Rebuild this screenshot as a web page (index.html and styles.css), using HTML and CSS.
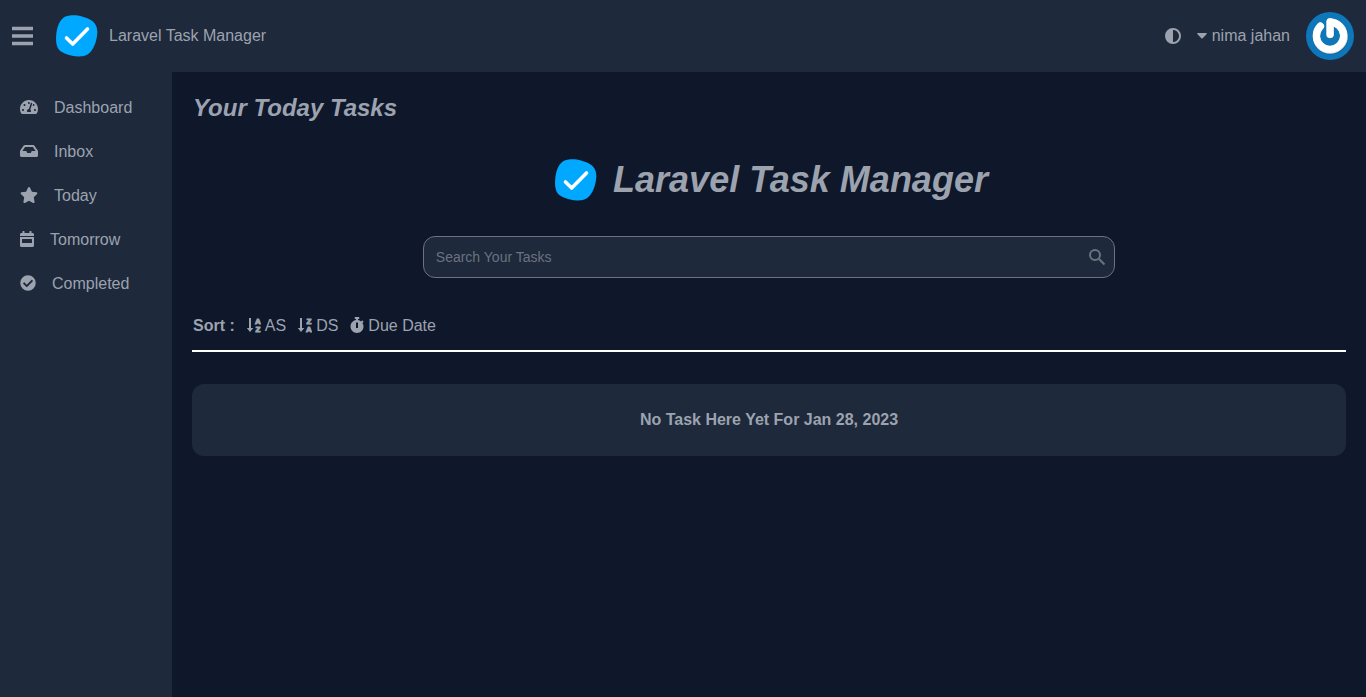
FILE: index.html
```html
<!DOCTYPE html>
<html lang="en">
<head>
<meta charset="utf-8">
<meta name="viewport" content="width=device-width, initial-scale=1">
<title>Laravel Task Manager</title>
<link rel="stylesheet" href="styles.css">
</head>
<body>
<svg class="sprite" aria-hidden="true">
  <symbol id="logo" viewBox="0 0 42 42">
    <path fill="#00a9ff" d="M15.500.3C22-.1 30 2 35.500 5.500c4.500 3 6.200 7.500 5.800 13-.5 6.500-2.500 12.700-6 17.500-3.200 4.300-8 5.700-13.300 5.400-6-.4-12.500-1.900-17-4.900C1 33.700-.2 28.500.1 22.500.4 16 1.500 9.800 5 5.200 7.500 1.900 11 .6 15.500.3Z"/>
    <path fill="none" stroke="#fff" stroke-width="3.600" stroke-linecap="round" stroke-linejoin="round" d="m10.500 23 6.200 6L31.500 14"/>
  </symbol>
</svg>
<header class="topbar">
  <button class="icon-button" type="button" aria-label="Toggle menu">
    <svg class="menu-icon" viewBox="0 0 22 20" fill="currentColor"><path d="M0 .8h21v3.500H0zM0 8.300h21v3.500H0zM0 15.800h21v3.500H0z"/></svg>
  </button>
  <a class="brand" href="#">
    <svg class="logo" aria-hidden="true"><use href="#logo"/></svg>
    <span>Laravel Task Manager</span>
  </a>
  <div class="account">
    <button class="icon-button" type="button" aria-label="Toggle theme">
      <svg class="theme-icon" viewBox="0 0 512 512" fill="currentColor"><path d="M448 256c0-106-86-192-192-192v384c106 0 192-86 192-192zM0 256a256 256 0 1 1 512 0 256 256 0 1 1-512 0z"/></svg>
    </button>
    <button class="user-button" type="button">
      <svg class="caret" viewBox="0 0 10 6" fill="currentColor" aria-hidden="true"><path d="M.8 0h8.400q1 .2.500 1L5.700 5.200q-.7.600-1.400 0L.3 1Q-.2.200.8 0z"/></svg>
      <span>nima jahan</span>
    </button>
    <svg class="avatar" viewBox="0 0 48 48" role="img" aria-label="nima jahan">
      <circle cx="24" cy="24" r="24" fill="#0d77b9"/>
      <g fill="none" stroke-linecap="round" stroke-linejoin="round" stroke-width="7.500">
        <path stroke="#075f98" d="M14.800 14.500a14 14 0 1 0 18.700-.5q-3.500-3-9-3.600V23"/>
        <path stroke="#dedede" d="M14.500 14.400a13.800 13.800 0 1 0 18.600-.8q-3.500-3-9-3.600v12.500"/>
        <path stroke="#fff" stroke-width="7" d="M14.300 14a13.600 13.600 0 1 0 18.800-.4q-3.500-3-9-3.800v12.400"/>
      </g>
    </svg>
  </div>
</header>
<div class="shell">
  <nav class="sidebar" aria-label="Main">
    <a class="nav-link" href="#">
      <svg class="icon icon-18" viewBox="0 0 576 512" fill="currentColor" aria-hidden="true"><path d="M288 32C128.900 32 0 160.900 0 320c0 52.800 14.300 102.300 39.100 144.800 5.600 9.600 16.300 15.200 27.400 15.200h443c11.100 0 21.800-5.600 27.400-15.200C561.800 422.300 576 372.800 576 320c0-159.100-128.900-288-288-288zm0 64c14.700 0 26.600 10.100 30.300 23.700-1.100 2.300-2.600 4.200-3.500 6.700l-9.200 27.700c-5.100 3.500-11 6-17.600 6-17.700 0-32-14.300-32-32s14.300-32 32-32zM96 384c-17.700 0-32-14.300-32-32s14.300-32 32-32 32 14.300 32 32-14.300 32-32 32zm48-160c-17.700 0-32-14.300-32-32s14.300-32 32-32 32 14.300 32 32-14.300 32-32 32zm246.800-72.400-61.300 184C343.100 347.300 352 364.500 352 384c0 11.700-3.400 22.600-8.900 32H232.900c-5.500-9.500-8.900-20.300-8.900-32 0-34 26.500-61.500 59.900-63.600l61.300-184c4.200-12.600 17.700-19.500 30.400-15.200 12.600 4.200 19.400 17.900 15.200 30.400zm14.700 57.200 15.500-46.600c3.500-1.300 7.100-2.200 11.100-2.200 17.700 0 32 14.300 32 32s-14.300 32-32 32c-11.400 0-20.900-6.300-26.600-15.200zM480 384c-17.700 0-32-14.300-32-32s14.300-32 32-32 32 14.300 32 32-14.300 32-32 32z"/></svg>
      Dashboard
    </a>
    <a class="nav-link" href="#">
      <svg class="icon icon-18" viewBox="0 0 576 512" fill="currentColor" aria-hidden="true"><path d="M567.900 243.900 462.200 85.400A48 48 0 0 0 422.200 64H153.800a48 48 0 0 0-40 21.400L8.100 243.900A48 48 0 0 0 0 270.500V400c0 26.500 21.500 48 48 48h480c26.500 0 48-21.500 48-48V270.500a48 48 0 0 0-8.100-26.600zM162.300 128h251.400l85.300 128H376l-32 64H232l-32-64H77z"/></svg>
      Inbox
    </a>
    <a class="nav-link" href="#">
      <svg class="icon icon-18" viewBox="0 0 576 512" fill="currentColor" aria-hidden="true"><path d="M259.300 17.800 194 150.200 47.900 171.500c-26.200 3.800-36.700 36.100-17.700 54.600l105.700 103-25 145.500c-4.500 26.300 23.200 46 46.400 33.700L288 439.600l130.700 68.700c23.200 12.200 50.900-7.400 46.400-33.700l-25-145.500 105.700-103c19-18.500 8.500-50.800-17.700-54.600L382 150.200 316.700 17.800c-11.700-23.600-45.600-23.900-57.400 0z"/></svg>
      Today
    </a>
    <a class="nav-link" href="#">
      <svg class="icon icon-14" viewBox="0 0 448 512" fill="currentColor" aria-hidden="true"><path d="M96 0h32q16 0 16 16v48h160V16q0-16 16-16h32q16 0 16 16v48h32c27 0 48 21 48 48v48H0v-48c0-27 21-48 48-48h32V16Q80 0 96 0zM0 192h448v272c0 27-21 48-48 48H48c-27 0-48-21-48-48zm80 64q-16 0-16 16v96q0 16 16 16h288q16 0 16-16v-96q0-16-16-16z"/></svg>
      Tomorrow
    </a>
    <a class="nav-link" href="#">
      <svg class="icon icon-16" viewBox="0 0 512 512" fill="currentColor" aria-hidden="true"><path d="M504 256a248 248 0 1 1-496 0 248 248 0 1 1 496 0zM227.300 387.300l184-184c6.200-6.200 6.200-16.400 0-22.600l-22.600-22.600c-6.200-6.200-16.400-6.200-22.600 0L216 308.100l-70.100-70.100c-6.200-6.200-16.400-6.200-22.600 0l-22.600 22.600c-6.200 6.200-6.200 16.400 0 22.600l104 104c6.200 6.300 16.400 6.300 22.600.1z"/></svg>
      Completed
    </a>
  </nav>
  <main class="content">
    <h2 class="page-title">Your Today Tasks</h2>
    <div class="hero">
      <svg class="logo" aria-hidden="true"><use href="#logo"/></svg>
      <h1 class="hero-title">Laravel Task Manager</h1>
    </div>
    <form class="search" role="search">
      <input class="search-input" type="search" aria-label="Search your tasks" placeholder="Search Your Tasks">
      <button class="icon-button search-button" type="button" aria-label="Search">
        <svg class="search-icon" viewBox="0 0 18 18" fill="none" stroke="currentColor" stroke-width="2" aria-hidden="true"><circle cx="7" cy="7" r="5"/><path d="m10.800 10.800 5.700 5.700"/></svg>
      </button>
    </form>
    <div class="sort">
      <strong class="sort-label">Sort :</strong>
      <a class="sort-link" href="#">
        <svg class="icon icon-14" viewBox="1 0 14 16" fill="currentColor" aria-hidden="true"><path d="M3 1h2v10h2.300L4 15 .9 11H3z"/><text class="sort-letter" x="12" y="7">A</text><text class="sort-letter" x="12" y="15">Z</text></svg>
        AS
      </a>
      <a class="sort-link" href="#">
        <svg class="icon icon-14" viewBox="1 0 14 16" fill="currentColor" aria-hidden="true"><path d="M3 1h2v10h2.300L4 15 .9 11H3z"/><text class="sort-letter" x="12" y="7">Z</text><text class="sort-letter" x="12" y="15">A</text></svg>
        DS
      </a>
      <a class="sort-link" href="#">
        <svg class="icon icon-14" viewBox="0 0 448 512" fill="currentColor" aria-hidden="true"><path d="M432 304c0 114.900-93.100 208-208 208S16 418.900 16 304c0-104 76.300-190.200 176-205.500V64h-28c-6.600 0-12-5.400-12-12V12c0-6.600 5.400-12 12-12h120c6.600 0 12 5.400 12 12v40c0 6.600-5.400 12-12 12h-28v34.500c37.500 5.800 71.700 21.600 99.700 44.600l27.500-27.500c4.700-4.700 12.300-4.700 17 0l28.300 28.300c4.700 4.700 4.700 12.300 0 17l-29.400 29.400C419.700 223.900 432 262.500 432 304zm-176 36V188c0-6.600-5.400-12-12-12h-40c-6.600 0-12 5.400-12 12v152c0 6.600 5.400 12 12 12h40c6.600 0 12-5.400 12-12z"/></svg>
        Due Date
      </a>
    </div>
    <p class="empty">No Task Here Yet For Jan 28, 2023</p>
  </main>
</div>
</body>
</html>
```
FILE: styles.css
```css
* {
  box-sizing: border-box;
}

body {
  margin: 0;
  min-height: 100vh;
  display: flex;
  flex-direction: column;
  background: #0f172a;
  color: #9ca3af;
  font: 16px/24px "Liberation Sans", Arial, sans-serif;
}

a {
  color: inherit;
  text-decoration: none;
}

button {
  font: inherit;
  color: inherit;
  background: none;
  border: 0;
  padding: 0;
  cursor: pointer;
}

svg {
  display: block;
  flex: none;
}

.sprite {
  position: absolute;
  width: 0;
  height: 0;
}

.topbar {
  display: flex;
  align-items: center;
  padding: 12px;
  background: #1e293b;
}

.icon-button {
  display: flex;
}

.menu-icon {
  width: 22px;
  height: 20px;
}

.brand {
  display: flex;
  align-items: center;
  gap: 11px;
  margin-left: 22px;
}

.logo {
  width: 42px;
  height: 42px;
}

.account {
  display: flex;
  align-items: center;
  gap: 16px;
  margin-left: auto;
}

.theme-icon {
  width: 16px;
  height: 16px;
}

.user-button {
  display: flex;
  align-items: center;
  gap: 5px;
}

.caret {
  width: 10px;
  height: 6px;
}

.avatar {
  width: 48px;
  height: 48px;
}

.shell {
  flex: 1;
  display: flex;
}

.sidebar {
  flex: none;
  width: 172px;
  padding: 14px 0;
  background: #1e293b;
}

.nav-link {
  display: flex;
  align-items: center;
  gap: 16px;
  padding: 10px 20px;
}

.icon {
  height: 16px;
  margin-bottom: 2px;
}

.icon-18 {
  width: 18px;
}

.icon-16 {
  width: 16px;
}

.icon-14 {
  width: 14px;
}

.content {
  flex: 1;
  padding: 20px;
}

.page-title {
  margin: 0;
  padding-left: 1px;
  font-size: 24px;
  line-height: 32px;
  font-style: italic;
}

.hero {
  display: flex;
  align-items: center;
  justify-content: center;
  gap: 16px;
  margin: 34px 0;
  padding-left: 5px;
}

.hero-title {
  margin: 0;
  font-size: 36px;
  line-height: 44px;
  font-style: italic;
}

.search {
  display: flex;
  align-items: center;
  width: 60%;
  margin: 0 auto;
  border: 1px solid #6b7280;
  border-radius: 12px;
  background: #1e293b;
}

.search-input {
  flex: 1;
  min-width: 0;
  padding: 10px 12px;
  border: 0;
  outline: 0;
  background: none;
  color: inherit;
  font: 14px/20px "Liberation Sans", Arial, sans-serif;
}

.search-input::placeholder {
  color: #6b7280;
}

.search-button {
  padding: 0 8px;
  color: #6b7280;
}

.search-icon {
  width: 18px;
  height: 18px;
}

.sort {
  display: flex;
  align-items: center;
  gap: 12px;
  margin: 32px 0;
  padding: 4px 1px 12px;
  border-bottom: 2px solid #fff;
}

.sort-link {
  display: flex;
  align-items: center;
  gap: 4px;
}

.sort-letter {
  font-size: 8px;
  font-weight: bold;
  text-anchor: middle;
  stroke: currentColor;
  stroke-width: 1px;
}

.empty {
  margin: 0;
  padding: 24px;
  border-radius: 12px;
  background: #1e293b;
  font-weight: bold;
  text-align: center;
}
```
